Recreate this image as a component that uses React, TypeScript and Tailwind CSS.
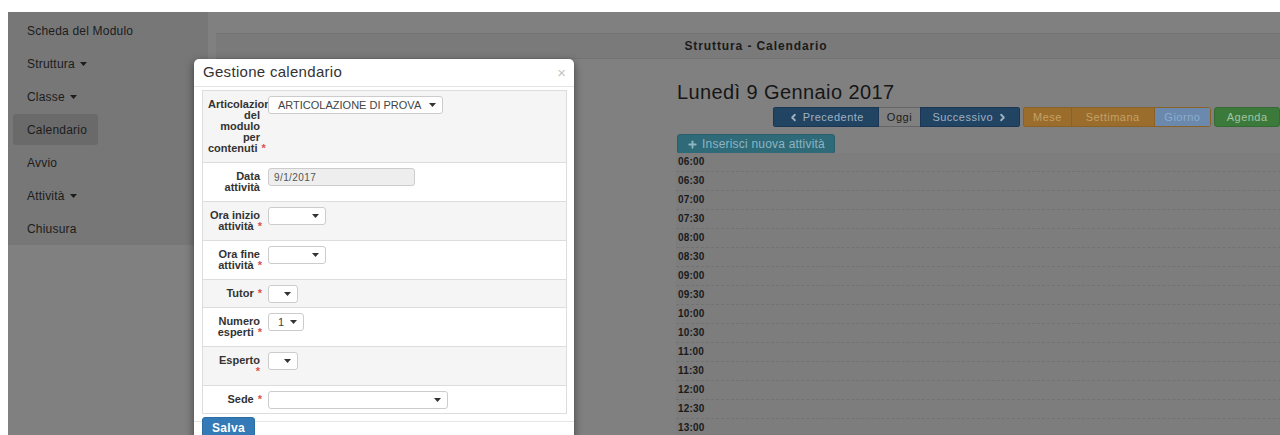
import React from 'react';
import { ChevronLeft, ChevronRight, Plus } from 'lucide-react';

type MenuItem = { label: string; caret?: boolean; active?: boolean };

const menu: MenuItem[] = [
  { label: 'Scheda del Modulo' },
  { label: 'Struttura', caret: true },
  { label: 'Classe', caret: true },
  { label: 'Calendario', active: true },
  { label: 'Avvio' },
  { label: 'Attività', caret: true },
  { label: 'Chiusura' },
];

const slots = [
  '06:00', '06:30', '07:00', '07:30', '08:00', '08:30', '09:00', '09:30',
  '10:00', '10:30', '11:00', '11:30', '12:00', '12:30', '13:00', '13:30',
];

type FieldRow = { lines: string[]; width: number; value?: string; input?: boolean };

const fields: FieldRow[] = [
  { lines: ['Articolazione', 'del', 'modulo', 'per', 'contenuti *'], width: 175, value: 'ARTICOLAZIONE DI PROVA' },
  { lines: ['Data', 'attività'], width: 147, value: '9/1/2017', input: true },
  { lines: ['Ora inizio', 'attività *'], width: 58 },
  { lines: ['Ora fine', 'attività *'], width: 58 },
  { lines: ['Tutor *'], width: 30 },
  { lines: ['Numero', 'esperti *'], width: 36, value: '1' },
  { lines: ['Esperto', '*'], width: 30 },
  { lines: ['Sede *'], width: 180 },
];

const Caret = ({ className = '' }: { className?: string }) => (
  <svg width="7" height="4" viewBox="0 0 7 4" className={className}>
    <path d="M0 0h7L3.5 4z" fill="currentColor" />
  </svg>
);

const Label = ({ lines }: { lines: string[] }) => (
  <div className="font-bold text-[11px] leading-[11px] text-[#333]">
    {lines.map((line, i) => {
      const star = line.endsWith('*');
      const text = star ? line.replace(/\s?\*$/, '') : line;
      return (
        <div key={i} className="whitespace-nowrap text-right">
          {text}
          {star && <span className={`text-[#d9534f] ${text ? 'ml-[4px] -mr-[2px]' : ''}`}>*</span>}
        </div>
      );
    })}
  </div>
);

function Field({ row, striped }: { row: FieldRow; striped: boolean }) {
  return (
    <div className={`flex border-t border-[#ddd] first:border-t-0 ${striped ? 'bg-[#f5f5f5]' : 'bg-white'}`}>
      <div className="w-[63px] shrink-0 py-[8px] pl-[5px] pr-[6px]">
        <Label lines={row.lines} />
      </div>
      <div className="pt-[5px] pl-[2px] relative">
        {row.input ? (
          <div
            style={{ width: row.width }}
            className="h-[18px] border border-[#ccc] rounded-[3px] bg-[#eee] pl-[5px] flex items-center text-[10px] tracking-[0.4px] text-[#555]"
          >
            {row.value}
          </div>
        ) : (
          <div
            style={{ width: row.width }}
            className="h-[18px] border border-[#ccc] rounded-[3px] bg-white pl-[9px] pr-[6px] flex items-center text-[11px] text-[#444] whitespace-nowrap"
          >
            <span className="shrink-0">{row.value ?? ''}</span>
            <Caret className="text-[#333] ml-auto shrink-0" />
          </div>
        )}
      </div>
    </div>
  );
}

function Sidebar() {
  return (
    <aside className="w-[200px] h-[233px] shrink-0 bg-[#777] pt-[2px]">
      {menu.map((item) => (
        <div key={item.label} className="h-[33px] flex items-center">
          <div
            className={`ml-[5px] h-[31px] pl-[14px] flex items-center rounded-[3px] text-[12px] tracking-[0.2px] text-[#1c1c1c] ${
              item.active ? 'w-[85px] bg-[#6a6a6a]' : ''
            }`}
          >
            {item.label}
            {item.caret && <Caret className="ml-[5px] text-[#1c1c1c]" />}
          </div>
        </div>
      ))}
    </aside>
  );
}

function Calendar() {
  return (
    <div className="ml-[468px] mt-[23px]">
      <h2 className="text-[20px] leading-[20px] tracking-[0.4px] text-[#161616] pl-[1px]">Lunedì 9 Gennaio 2017</h2>
      <div className="mt-[5px] ml-[97px] flex gap-[3px] h-[20px] text-[11px] tracking-[0.5px]">
        <div className="flex rounded-[3px] overflow-hidden">
          <div className="w-[106px] bg-[#214463] border border-[#1a3654] text-[#9fb0c2] flex items-center justify-center gap-[4px]">
            <ChevronLeft size={11} strokeWidth={4} />
            Precedente
          </div>
          <div className="w-[42px] bg-[#808080] border-y border-[#666] text-[#1c1c1c] flex items-center justify-center">Oggi</div>
          <div className="w-[100px] bg-[#214463] border border-[#1a3654] text-[#9fb0c2] flex items-center justify-center gap-[4px]">
            Successivo
            <ChevronRight size={11} strokeWidth={4} />
          </div>
        </div>
        <div className="flex rounded-[3px] overflow-hidden">
          <div className="w-[49px] bg-[#9a6d2c] border border-[#8a6126] text-[#c4a068] flex items-center justify-center">Mese</div>
          <div className="w-[82px] bg-[#9a6d2c] border-y border-[#8a6126] text-[#c4a068] flex items-center justify-center">Settimana</div>
          <div className="w-[58px] bg-[#6a89ad] border border-[#8a6126] text-[#8faccd] flex items-center justify-center">Giorno</div>
        </div>
        <div className="w-[66px] rounded-[3px] bg-[#3b7a3b] border border-[#336b33] text-[#a4c4a4] flex items-center justify-center">
          Agenda
        </div>
      </div>
      <div className="mt-[7px] ml-[1px] w-[158px] h-[20px] rounded-[3px] bg-[#2f6a79] border border-[#2a5f6d] text-[#8db5c2] text-[12px] tracking-[0.2px] flex items-center justify-center gap-[4px]">
        <Plus size={11} strokeWidth={4} />
        Inserisci nuova attività
      </div>
      <div className="-mt-[1px] w-[720px]">
        {slots.map((s) => (
          <div key={s} className="h-[19px] border-b border-dashed border-[#727272] bg-[#7d7d7d] pl-[2px] pt-[3px] text-[10px] leading-[11px] font-bold tracking-[0.2px] text-[#1a1a1a]">
            {s}
          </div>
        ))}
      </div>
    </div>
  );
}

function CalendarModal() {
  return (
    <div className="absolute left-[186px] top-[47px] w-[380px] h-[420px] bg-white rounded-[5px] shadow-[0_3px_9px_rgba(0,0,0,0.5)]">
      <div className="h-[28px] pl-[9px] pr-[8px] flex items-center justify-between border-b border-[#e5e5e5]">
        <span className="text-[15px] tracking-[0.3px] text-[#333]">Gestione calendario</span>
        <span className="text-[15px] leading-none text-[#c4c4c4]">×</span>
      </div>
      <div className="pt-[3px] pl-[8px] pr-[7px]">
        <div className="border border-[#ddd]">
          {fields.map((row, i) => (
            <Field key={i} row={row} striped={i % 2 === 0} />
          ))}
        </div>
      </div>
      <div className="flex items-start mt-[3px]">
        <div className="w-[8px] mt-[4px] border-t border-[#e5e5e5]" />
        <button className="w-[53px] h-[22px] rounded-[3px] bg-[#337ab7] border border-[#2e6da4] text-white text-[12px] tracking-[0.3px] font-bold">
          Salva
        </button>
        <div className="flex-1 mt-[4px] border-t border-[#e5e5e5]" />
      </div>
    </div>
  );
}

export default function App() {
  return (
    <div className="w-[1280px] h-[435px] bg-white pt-[12px] pl-[8px] font-['Liberation_Sans',Arial,sans-serif]">
      <div className="relative h-full bg-[#808080] overflow-hidden flex">
        <Sidebar />
        <main className="flex-1 min-w-0">
          <div className="mt-[21px] ml-[8px] w-[1080px] h-[26px] bg-[#7a7a7a] border-y border-[#737373] flex items-center justify-center text-[12px] tracking-[0.9px] font-bold text-[#1a1a1a]">
            Struttura - Calendario
          </div>
          <Calendar />
        </main>
        <CalendarModal />
      </div>
    </div>
  );
}
